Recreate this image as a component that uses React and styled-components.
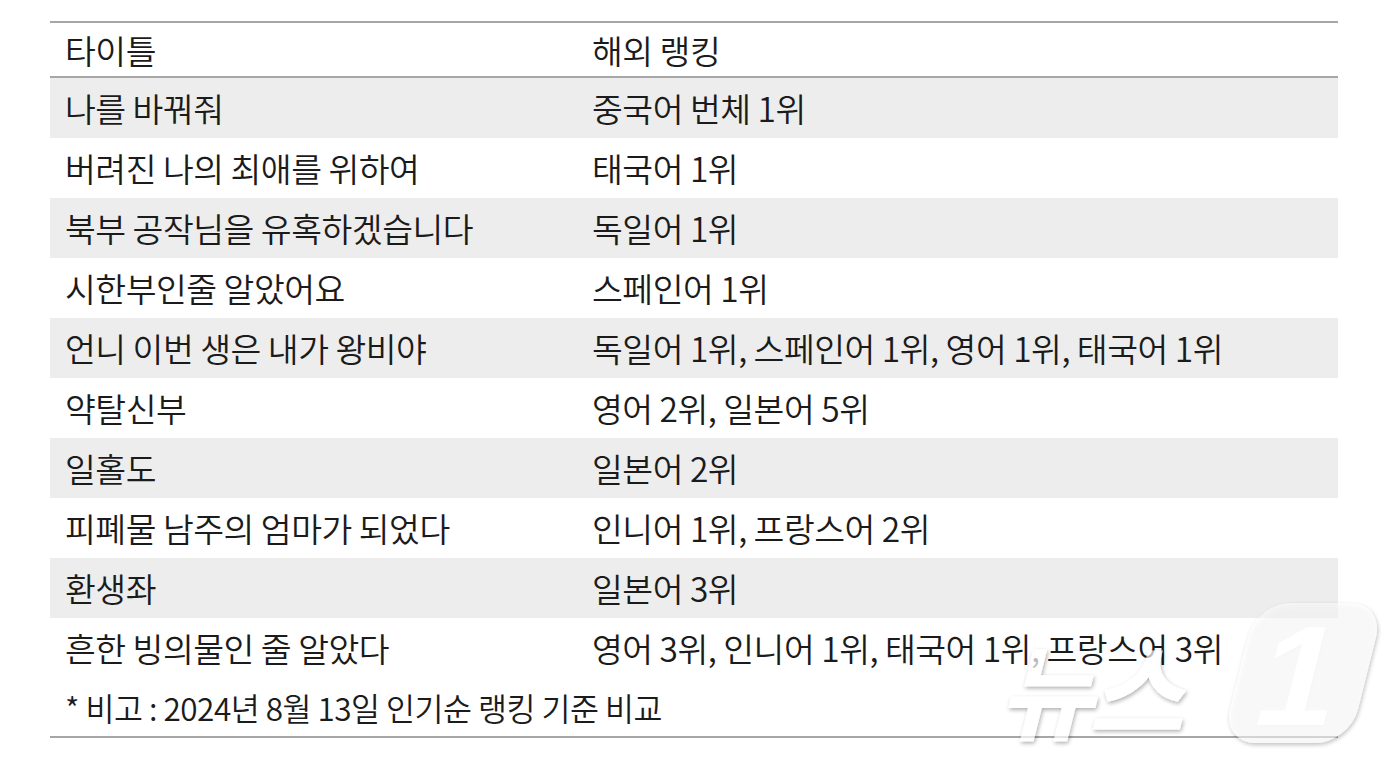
import React from 'react';
import styled, { createGlobalStyle } from 'styled-components';

const GlobalStyle = createGlobalStyle`
    html, body {
        margin: 0;
        padding: 0;
        background: #ffffff;
    }
    body {
        font-family: "Noto Sans CJK KR", "Noto Sans", sans-serif;
        color: #1b1b1b;
    }
`;

const Page = styled.div`
    position: relative;
    width: 1400px;
    height: 761px;
    padding: 21px 0 0 50px;
    box-sizing: border-box;
    overflow: hidden;
`;

const Table = styled.div`
    width: 1288px;
    border-top: 2px solid #a6a6a6;
    border-bottom: 2px solid #a6a6a6;
`;

const Row = styled.div`
    display: grid;
    grid-template-columns: 527px 1fr;
    align-items: center;
    height: ${props => props.height || 60}px;
    background: ${props => props.shaded ? '#ededed' : 'transparent'};
    border-bottom: ${props => props.ruled ? '2px solid #a6a6a6' : 'none'};
    box-sizing: border-box;
`;

const Cell = styled.div`
    padding-left: 15px;
    font-size: 33.5px;
    font-weight: 350;
    letter-spacing: -0.5px;
    line-height: 1;
    white-space: nowrap;
`;

const Note = styled.div`
    display: flex;
    align-items: center;
    height: 58px;
    padding-left: 15px;
    font-size: 31.5px;
    font-weight: 350;
    letter-spacing: -0.5px;
    white-space: nowrap;
`;

const Watermark = styled.svg`
    position: absolute;
    left: 990px;
    top: 592px;
    width: 410px;
    height: 169px;
    pointer-events: none;
`;

const rows = [
    ['나를 바꿔줘', '중국어 번체 1위'],
    ['버려진 나의 최애를 위하여', '태국어 1위'],
    ['북부 공작님을 유혹하겠습니다', '독일어 1위'],
    ['시한부인줄 알았어요', '스페인어 1위'],
    ['언니 이번 생은 내가 왕비야', '독일어 1위, 스페인어 1위, 영어 1위, 태국어 1위'],
    ['약탈신부', '영어 2위, 일본어 5위'],
    ['일홀도', '일본어 2위'],
    ['피폐물 남주의 엄마가 되었다', '인니어 1위, 프랑스어 2위'],
    ['환생좌', '일본어 3위'],
    ['흔한 빙의물인 줄 알았다', '영어 3위, 인니어 1위, 태국어 1위, 프랑스어 3위'],
];

// semi-transparent agency mark over the lower right corner
const NewsLogo = () => (
    <Watermark viewBox="0 0 410 169">
        <defs>
            <filter id="wm-shadow" x="-20%" y="-20%" width="140%" height="140%">
                <feDropShadow dx="1" dy="2" stdDeviation="2" floodColor="#000" floodOpacity="0.45" />
            </filter>
        </defs>
        <g filter="url(#wm-shadow)" opacity="0.7">
            <g transform="translate(313 81) skewX(-14)">
                <rect x="-64" y="-70" width="128" height="140" rx="34" fill="#fff" fillOpacity="0.75" />
                <text x="-2" y="52" textAnchor="middle" fontSize="142" fontWeight="900"
                    fontFamily="Liberation Sans, sans-serif" fill="#fff">1</text>
            </g>
            <g transform="translate(0 140) skewX(-14)">
                <text x="8" y="0" fontSize="104" fontWeight="700"
                    fontFamily="Noto Sans CJK KR, sans-serif" fill="#fff" letterSpacing="-6">뉴스</text>
            </g>
        </g>
    </Watermark>
);

export default function App() {
    return (
        <>
            <GlobalStyle />
            <Page>
                <Table>
                    <Row height={55} ruled>
                        <Cell>타이틀</Cell>
                        <Cell>해외 랭킹</Cell>
                    </Row>
                    {rows.map(([title, rank], i) => (
                        <Row key={title} shaded={i % 2 === 0}>
                            <Cell>{title}</Cell>
                            <Cell>{rank}</Cell>
                        </Row>
                    ))}
                    <Note>* 비고 : 2024년 8월 13일 인기순 랭킹 기준 비교</Note>
                </Table>
                <NewsLogo />
            </Page>
        </>
    );
}
